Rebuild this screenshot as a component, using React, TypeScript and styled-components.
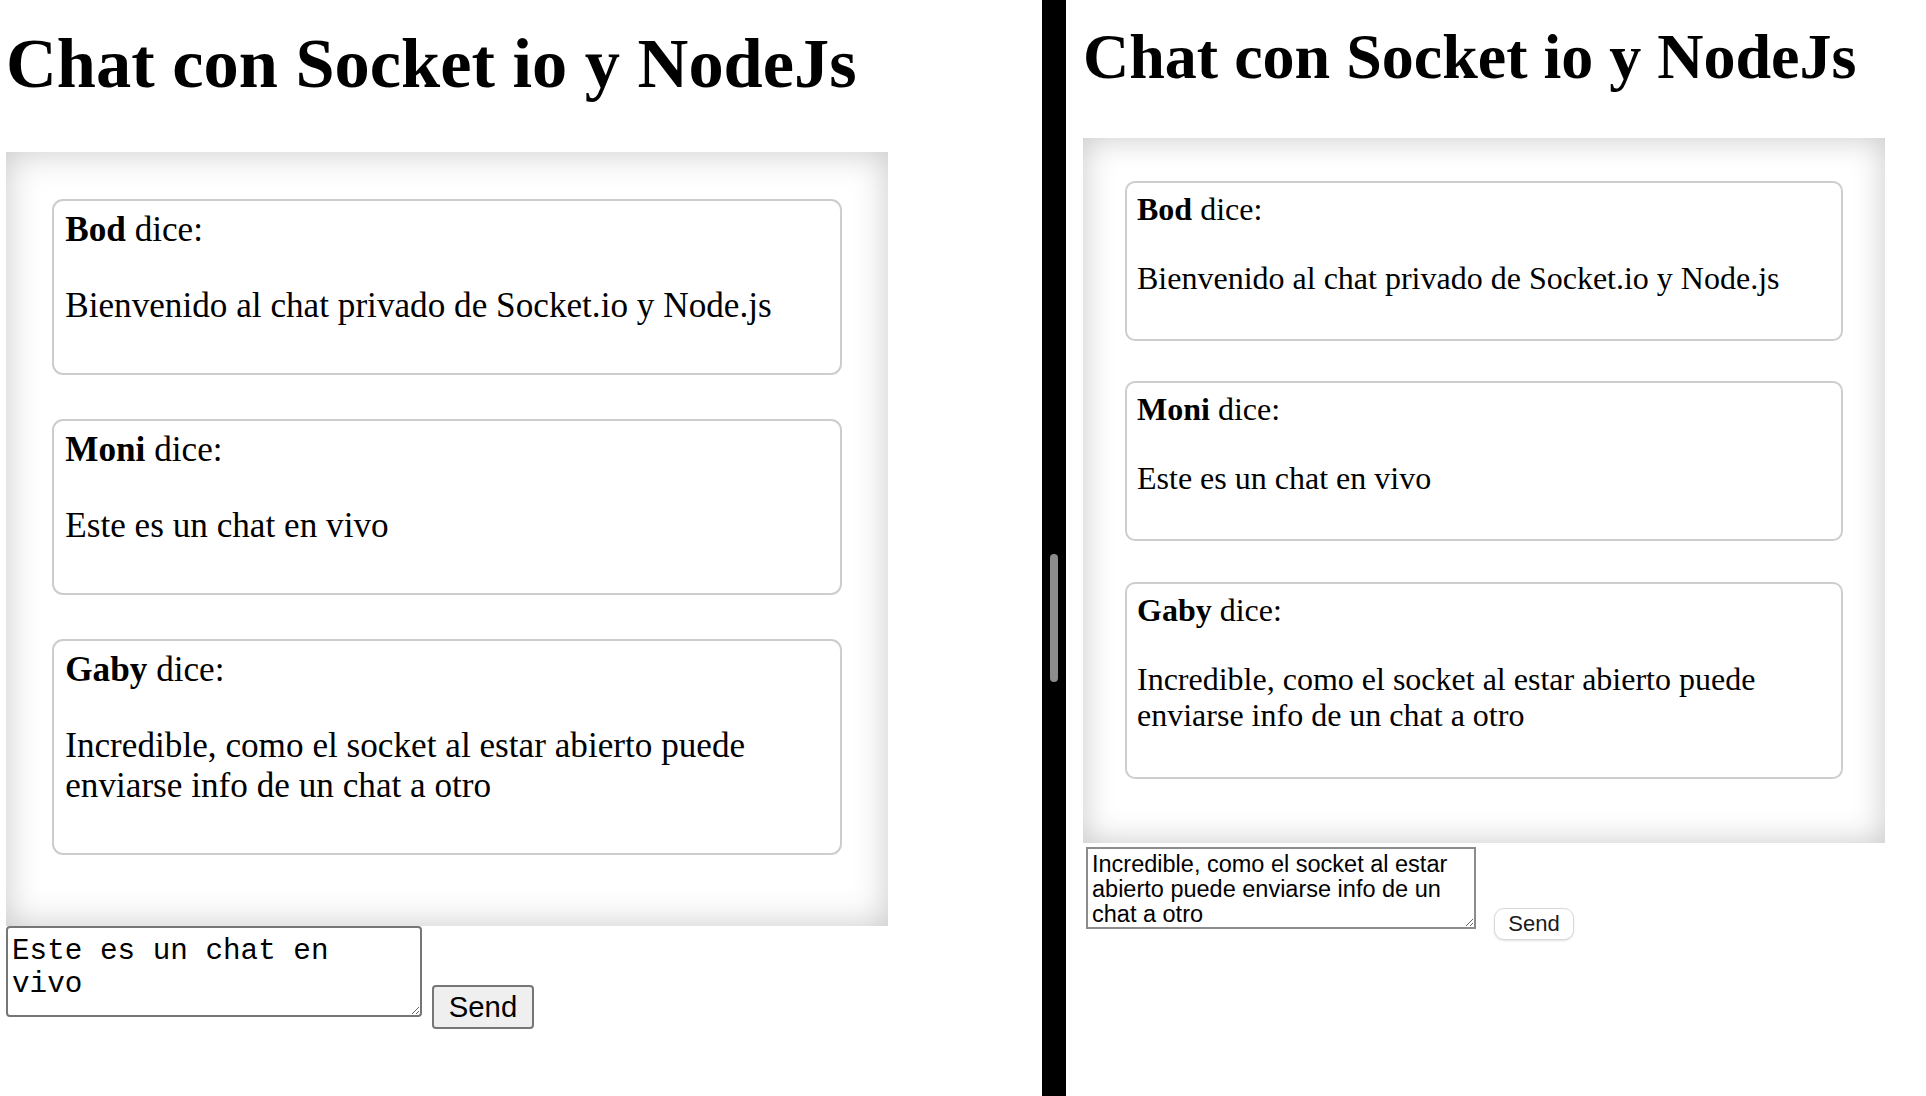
import React from 'react';
import styled, { createGlobalStyle, css } from 'styled-components';

const GlobalStyle = createGlobalStyle`
  html, body {
    margin: 0;
    padding: 0;
    background: #fff;
    overflow: hidden;
  }
  body {
    font-family: "Liberation Serif", "Times New Roman", serif;
    color: #000;
  }
`;

type Variant = 'chrome' | 'safari';

interface PaneSpec {
  z: number;
  width: number;
  padX: number;
  titleTop: number;
  titleSize: number;
  titleGap: number;
  variant: Variant;
  draft: string;
}

const messages = [
  { name: 'Bod', text: 'Bienvenido al chat privado de Socket.io y Node.js' },
  { name: 'Moni', text: 'Este es un chat en vivo' },
  { name: 'Gaby', text: 'Incredible, como el socket al estar abierto puede enviarse info de un chat a otro' },
];

const panes: PaneSpec[] = [
  {
    z: 2.2,
    width: 1042,
    padX: 6,
    titleTop: 28,
    titleSize: 70.4,
    titleGap: 53.6,
    variant: 'chrome',
    draft: 'Este es un chat en vivo',
  },
  {
    z: 2,
    width: 860,
    padX: 17,
    titleTop: 25,
    titleSize: 64,
    titleGap: 49,
    variant: 'safari',
    draft: 'Incredible, como el socket al estar abierto puede enviarse info de un chat a otro',
  },
];

const Desktop = styled.div`
  display: flex;
  width: 1926px;
  height: 1096px;
  overflow: hidden;
  background: #fff;
`;

const Pane = styled.div<{ $w: number; $padX: number; $top: number }>`
  flex: 0 0 ${(p) => p.$w}px;
  box-sizing: border-box;
  height: 100%;
  padding: ${(p) => p.$top}px 0 0 ${(p) => p.$padX}px;
  background: #fff;
  overflow: hidden;
  display: flex;
  flex-direction: column;
  align-items: flex-start;
`;

const Divider = styled.div`
  flex: 0 0 24px;
  box-sizing: border-box;
  height: 100%;
  background: #000;
  display: flex;
  justify-content: center;
  padding-top: 554px;
`;

const ScrollThumb = styled.div`
  width: 8px;
  height: 128px;
  border-radius: 4px;
  background: #8c8c8c;
`;

const Title = styled.h1<{ $size: number; $gap: number }>`
  margin: 0 0 ${(p) => p.$gap}px;
  font-family: "Liberation Serif", "Times New Roman", serif;
  font-weight: 700;
  font-size: ${(p) => p.$size}px;
  line-height: 1;
  color: #000;
  white-space: nowrap;
`;

const ChatBox = styled.div<{ $z: number }>`
  box-sizing: border-box;
  width: ${(p) => 401 * p.$z}px;
  padding: ${(p) => 21.5 * p.$z}px ${(p) => 21 * p.$z}px ${(p) => 32 * p.$z}px;
  display: flex;
  flex-direction: column;
  gap: ${(p) => 20.2 * p.$z}px;
  background: #fff;
  box-shadow: inset 0 0 ${(p) => 16 * p.$z}px rgba(0, 0, 0, 0.22);
`;

const Message = styled.div<{ $z: number }>`
  border: ${(p) => p.$z}px solid #cdcdcd;
  border-radius: ${(p) => 5 * p.$z}px;
  padding: ${(p) => 4 * p.$z}px ${(p) => 5 * p.$z}px ${(p) => 5.2 * p.$z}px;
  background: #fff;
  font-family: "Liberation Serif", "Times New Roman", serif;
  font-size: ${(p) => 16 * p.$z}px;
  line-height: 1.15;
  color: #000;
`;

const Author = styled.div``;

const Name = styled.strong`
  font-weight: 700;
`;

const Body = styled.p<{ $z: number }>`
  margin: ${(p) => 16 * p.$z}px 0;
`;

const Composer = styled.div<{ $v: Variant }>`
  display: flex;
  align-items: flex-start;
  ${(p) =>
    p.$v === 'chrome'
      ? css`
          margin-top: 0;
          margin-left: 0;
          gap: 10px;
        `
      : css`
          margin-top: 4px;
          margin-left: 3px;
          gap: 18px;
        `}
`;

const Draft = styled.textarea<{ $v: Variant }>`
  box-sizing: border-box;
  margin: 0;
  background: #fff;
  color: #000;
  outline: none;
  overflow: hidden;
  ${(p) =>
    p.$v === 'chrome'
      ? css`
          width: 416px;
          height: 91px;
          border: 2px solid #767676;
          border-radius: 4px;
          padding: 7px 26px 0 4px;
          font-family: "Liberation Mono", "Courier New", monospace;
          font-size: 29.3px;
          line-height: 33px;
        `
      : css`
          width: 390px;
          height: 82px;
          border: 2px solid #8c8c8c;
          border-radius: 0;
          padding: 3px 4px 2px;
          font-family: "Liberation Sans", Arial, sans-serif;
          font-size: 23.5px;
          line-height: 25px;
        `}
`;

const SendButton = styled.button<{ $v: Variant }>`
  box-sizing: border-box;
  margin: 0;
  padding: 0;
  cursor: pointer;
  font-family: "Liberation Sans", Arial, sans-serif;
  ${(p) =>
    p.$v === 'chrome'
      ? css`
          margin-top: 59px;
          width: 102px;
          height: 44px;
          border: 2px solid #767676;
          border-radius: 4px;
          background: #efefef;
          color: #000;
          font-size: 29.3px;
        `
      : css`
          margin-top: 61px;
          width: 80px;
          height: 32px;
          border: 1px solid #d9d9d9;
          border-radius: 10px;
          background: #fff;
          color: #1a1a1a;
          font-size: 22px;
          box-shadow: 0 1px 2px rgba(0, 0, 0, 0.12);
        `}
`;

function ChatPage({ spec }: { spec: PaneSpec }) {
  const { z } = spec;
  return (
    <Pane $w={spec.width} $padX={spec.padX} $top={spec.titleTop}>
      <Title $size={spec.titleSize} $gap={spec.titleGap}>
        Chat con Socket io y NodeJs
      </Title>
      <ChatBox $z={z}>
        {messages.map((m) => (
          <Message key={m.name} $z={z}>
            <Author>
              <Name>{m.name}</Name> dice:
            </Author>
            <Body $z={z}>{m.text}</Body>
          </Message>
        ))}
      </ChatBox>
      <Composer $v={spec.variant}>
        <Draft $v={spec.variant} defaultValue={spec.draft} spellCheck={false} />
        <SendButton $v={spec.variant}>Send</SendButton>
      </Composer>
    </Pane>
  );
}

export default function App() {
  return (
    <>
      <GlobalStyle />
      <Desktop>
        <ChatPage spec={panes[0]} />
        <Divider>
          <ScrollThumb />
        </Divider>
        <ChatPage spec={panes[1]} />
      </Desktop>
    </>
  );
}
